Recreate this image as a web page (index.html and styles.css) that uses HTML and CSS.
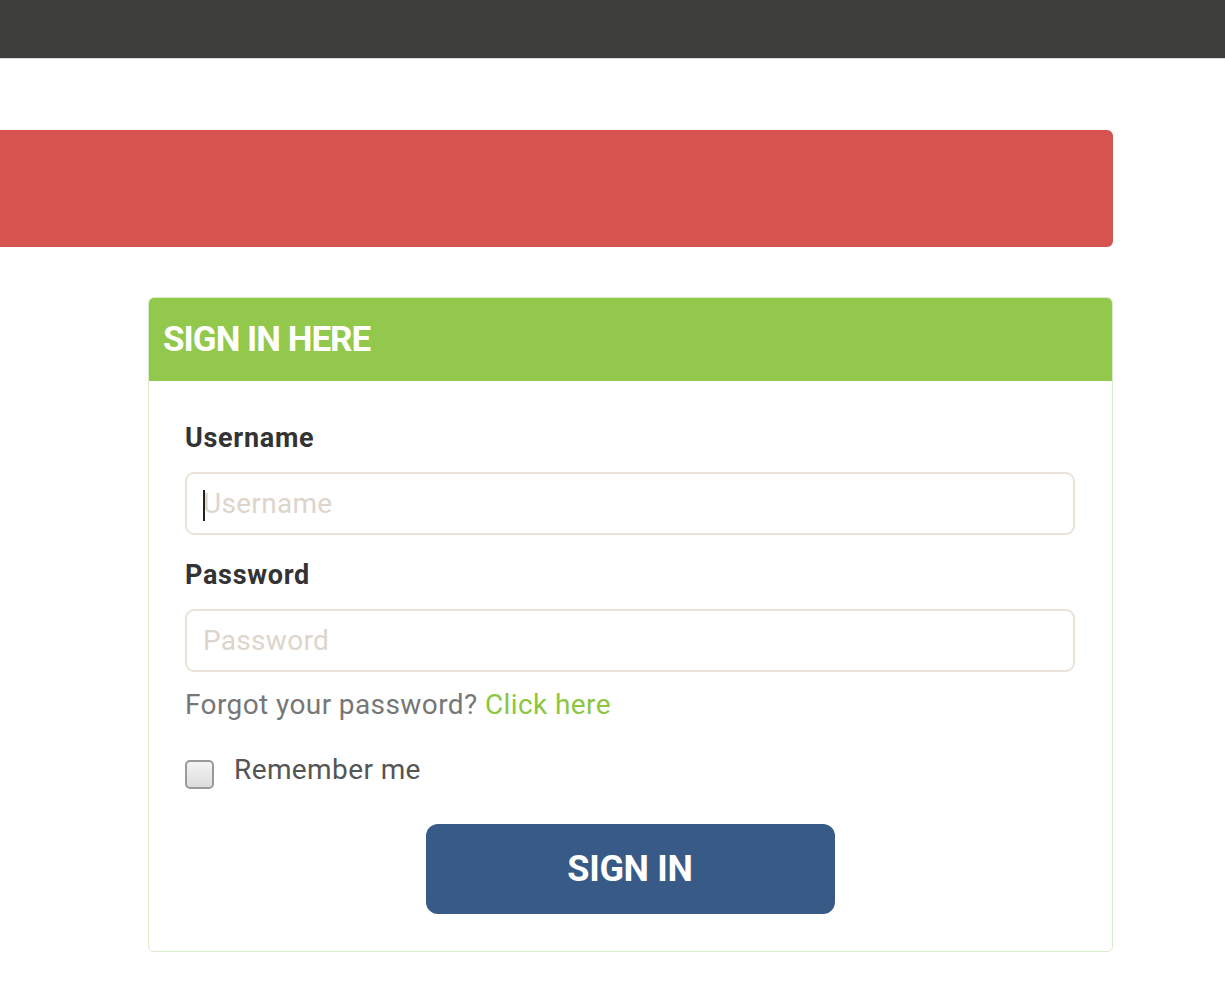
FILE: index.html
```html
<!DOCTYPE html>
<html>
<head>
  <meta charset="UTF-8" />
  <title>Sign In</title>
  <link rel="stylesheet" href="styles.css">
</head>
<body>
  <div class="topbar"></div>
  <div class="alert"></div>
  <div class="card">
    <div class="card-header">
      <h2>SIGN IN HERE</h2>
    </div>
    <form class="card-body">
      <label class="field-label" for="username">Username</label>
      <div class="input-box">
        <span class="caret"></span>
        <input type="text" id="username" placeholder="Username" />
      </div>
      <label class="field-label" for="password">Password</label>
      <div class="input-box">
        <input type="password" id="password" placeholder="Password" />
      </div>
      <p class="forgot">Forgot your password? <a href="#">Click here</a></p>
      <label class="remember">
        <span class="checkbox"></span>
        <span>Remember me</span>
      </label>
      <div class="actions">
        <button type="button" class="btn-signin">SIGN IN</button>
      </div>
    </form>
  </div>
</body>
</html>
```

FILE: styles.css
```css
:root {
  --topbar: #3e3e3a;
  --danger: #d65350;
  --green: #92c84c;
  --link: #8dc63f;
  --navy: #375a87;
  --text: #333333;
  --muted: #777777;
}

* {
  margin: 0;
  padding: 0;
  box-sizing: border-box;
}

body {
  font-family: Roboto, "Liberation Sans", sans-serif;
  background: #ffffff;
  color: var(--text);
}

.topbar {
  height: 59px;
  background: var(--topbar);
  border-bottom: 1px solid #d8d8d8;
}

.alert {
  height: 117px;
  margin: 71px 112px 0 0;
  background: var(--danger);
  border-radius: 0 6px 6px 0;
}

.card {
  width: 965px;
  margin: 50px 0 0 148px;
  border: 1px solid #d9ecc9;
  border-radius: 6px;
  overflow: hidden;
}

.card-header {
  height: 83px;
  background: var(--green);
  display: flex;
  align-items: center;
  padding: 0 14px;
}

.card-header h2 {
  color: #ffffff;
  font-size: 35px;
  font-weight: 700;
  letter-spacing: -1px;
}

.card-body {
  display: flex;
  flex-direction: column;
  padding: 40px 37px 37px 36px;
}

.field-label {
  font-size: 27px;
  font-weight: 700;
  line-height: 34px;
  letter-spacing: 0.7px;
  color: var(--text);
  margin-bottom: 17px;
}

.input-box {
  position: relative;
  height: 63px;
  border: 2px solid #ebe3da;
  border-radius: 9px;
  margin-bottom: 23px;
}

.input-box input {
  width: 100%;
  height: 100%;
  border: none;
  outline: none;
  background: transparent;
  padding: 0 16px;
  font-family: Roboto, "Liberation Sans", sans-serif;
  font-size: 28px;
  letter-spacing: 0.3px;
  color: var(--text);
}

.input-box input::placeholder {
  color: #ddd5cb;
}

.caret {
  position: absolute;
  left: 16px;
  top: 16px;
  width: 2px;
  height: 31px;
  background: #222222;
}

.forgot {
  margin-top: -7px;
  font-size: 28px;
  line-height: 34px;
  letter-spacing: 0.4px;
  color: var(--muted);
}

.forgot a {
  color: var(--link);
  text-decoration: none;
}

.remember {
  display: flex;
  align-items: center;
  gap: 20px;
  margin-top: 28px;
  font-size: 28px;
  letter-spacing: 0.4px;
  color: #555555;
}

.checkbox {
  width: 29px;
  height: 29px;
  border: 2px solid #9a9a9a;
  border-radius: 5px;
  background: linear-gradient(#f4f4f4, #dcdcdc);
  margin-top: 10px;
}

.actions {
  display: flex;
  justify-content: center;
  margin-top: 35px;
}

.btn-signin {
  width: 409px;
  height: 90px;
  background: var(--navy);
  color: #ffffff;
  border: none;
  border-radius: 12px;
  font-family: Roboto, "Liberation Sans", sans-serif;
  font-size: 36px;
  font-weight: 700;
  letter-spacing: -0.3px;
  cursor: pointer;
}
```
